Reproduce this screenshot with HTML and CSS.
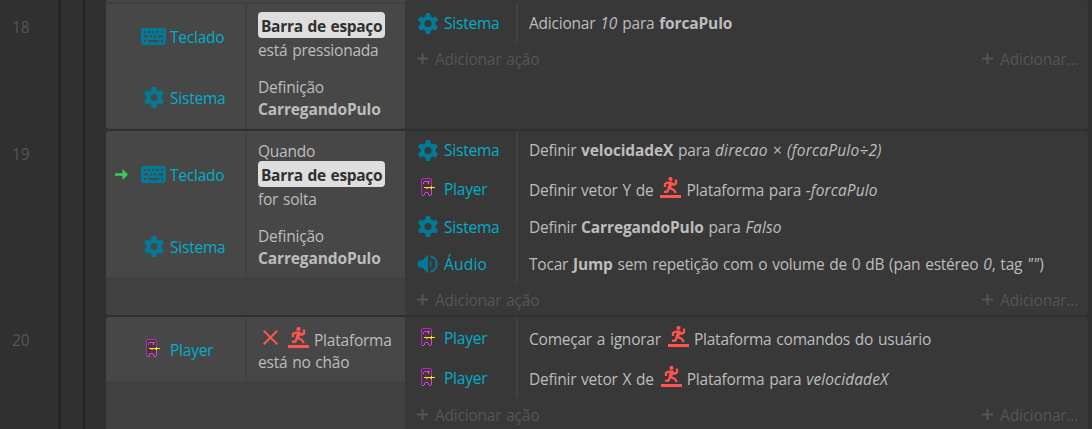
FILE: index.html
```
<!DOCTYPE html>
<html lang="pt-BR">
<head>
<meta charset="utf-8">
<title>Folha de eventos</title>
<link rel="stylesheet" href="styles.css">
</head>
<body>
<svg class="defs" aria-hidden="true">
  <symbol id="gear" viewBox="0 0 20 21"><path fill-rule="evenodd" d="M8 0h4l.7 3.300 2 1.100L18 3.600l2 3.400-2.400 2.300v2.400L20 14l-2 3.400-3.300-.9-2 1.200L12 21H8l-.7-3.300-2-1.200-3.300.9L0 14l2.400-2.300V9.300L0 7l2-3.400 3.300.8 2-1.100zM10 7a3.500 3.500 0 1 0 0 7a3.500 3.500 0 1 0 0-7z"/></symbol>
  <symbol id="keyboard" viewBox="0 0 25 17"><path fill-rule="evenodd" d="M1.500 0h22L25 1.500v14L23.500 17h-22L0 15.500v-14zM3 3v2h2V3zm4 0v2h2V3zm4 0v2h2V3zm4 0v2h2V3zm5 0v2h2V3zM3 7.500v2h4v-2zm6 0v2h2v-2zm4 0v2h2v-2zm4 0v2h5v-2zM3 12v2h2v-2zm4 0v2h11v-2zm13 0v2h2v-2z"/></symbol>
  <symbol id="speaker" viewBox="0 0 20 18"><path d="M0 5.500h4L10 0v18l-6-5.500H0zM12 5q3 4 0 8z"/><path d="M12.500 1.200a8 8 0 0 1 0 15.600" fill="none" stroke="currentColor" stroke-width="2"/></symbol>
  <symbol id="player" viewBox="0 0 14 18"><g shape-rendering="crispEdges"><path fill="#4a3049" d="M1 1h9v13H1z"/><path fill="#a832a5" d="M1 0h9v1H1zM0 1h1v16H0zM10 1h1v7h-1z"/><path fill="#dc44d8" d="M3 3h6v1H3zM2 4h1v2H2zM10 11h1v6h-1zM1 17h2v1H1zM8 17h2v1H8zM3 15h1v2H3zM7 15h1v2H7zM4 14h3v1H4z"/><path fill="#baa51b" d="M7 4h1v2H7zM5 10h2v1H5zM9 10h2v1H9z"/><path fill="#f1e800" d="M3 9h11v1H3zM10 8h1v3h-1z"/></g></symbol>
  <symbol id="runner" viewBox="0 0 21 21"><circle cx="10.500" cy="2" r="2.100"/><path fill="none" stroke="currentColor" stroke-width="2.300" stroke-linejoin="round" d="M5 10V6.800L8 5.600h3.500l1.800 2.300L16 6.500V2.500"/><path fill="none" stroke="currentColor" stroke-width="3.600" d="M10.800 6L9.300 11"/><path fill="none" stroke="currentColor" stroke-width="2.300" stroke-linejoin="round" d="M4 14.800l3.500-.3L9 10.800l5 2.200L15.800 16"/><path d="M0 18h21v3H0z"/></symbol>
  <symbol id="plus" viewBox="0 0 11 11"><path d="M4.500 0h2v4.500H11v2H6.500V11h-2V6.500H0v-2h4.500z"/></symbol>
  <symbol id="cross" viewBox="0 0 15 15"><path fill="none" stroke="currentColor" stroke-width="2" d="M.7.700l13.600 13.600M14.300.700L.7 14.300"/></symbol>
  <symbol id="arrow" viewBox="0 0 13 11"><path d="M0 4.300h7.500V0l5.500 5.500L7.500 11V6.700H0z"/></symbol>
</svg>
<main class="sheet">
  <div class="events">
    <section class="event event-previous"><div class="number"></div><div class="conditions"><div class="filled"></div></div><div class="actions"></div></section>

    <section class="event event-18">
      <div class="number">18</div>
      <div class="conditions">
        <div class="condition tall">
          <div class="object"><span class="marker"></span><svg class="icon keyboard"><use href="#keyboard"/></svg><span class="name">Teclado</span></div>
          <div class="text"><p class="key-line"><b class="key">Barra de espaço</b></p><p>está pressionada</p></div>
        </div>
        <div class="condition">
          <div class="object"><span class="marker"></span><svg class="icon gear"><use href="#gear"/></svg><span class="name sistema">Sistema</span></div>
          <div class="text"><p>Definição</p><p><b>CarregandoPulo</b></p></div>
        </div>
      </div>
      <div class="actions">
        <div class="action"><div class="object"><svg class="icon gear"><use href="#gear"/></svg><span class="name">Sistema</span></div><p class="text">Adicionar <i>10</i> para <b>forcaPulo</b></p></div>
        <div class="add"><span class="add-link"><svg class="plus"><use href="#plus"/></svg><span>Adicionar ação</span></span><span class="add-link"><svg class="plus"><use href="#plus"/></svg><span>Adicionar...</span></span></div>
      </div>
    </section>

    <section class="event event-19">
      <div class="number">19</div>
      <div class="conditions">
        <div class="condition triple">
          <div class="object"><span class="marker"><svg class="arrow"><use href="#arrow"/></svg></span><svg class="icon keyboard"><use href="#keyboard"/></svg><span class="name">Teclado</span></div>
          <div class="text"><p>Quando</p><p class="key-line"><b class="key">Barra de espaço</b></p><p>for solta</p></div>
        </div>
        <div class="condition">
          <div class="object"><span class="marker"></span><svg class="icon gear"><use href="#gear"/></svg><span class="name sistema">Sistema</span></div>
          <div class="text"><p>Definição</p><p><b>CarregandoPulo</b></p></div>
        </div>
      </div>
      <div class="actions">
        <div class="action"><div class="object"><svg class="icon gear"><use href="#gear"/></svg><span class="name">Sistema</span></div><p class="text">Definir <b>velocidadeX</b> para <i class="formula">direcao × (forcaPulo÷2)</i></p></div>
        <div class="action high"><div class="object"><svg class="icon player"><use href="#player"/></svg><span class="name">Player</span></div><p class="text"><span>Definir vetor Y de</span><svg class="runner"><use href="#runner"/></svg><span>Plataforma para <i>-forcaPulo</i></span></p></div>
        <div class="action short"><div class="object"><svg class="icon gear"><use href="#gear"/></svg><span class="name">Sistema</span></div><p class="text">Definir <b>CarregandoPulo</b> para <i>Falso</i></p></div>
        <div class="action short"><div class="object"><svg class="icon speaker"><use href="#speaker"/></svg><span class="name audio">Áudio</span></div><p class="text">Tocar <b>Jump</b> sem repetição com o volume de 0 dB (pan estéreo <i>0</i>, tag <i>""</i>)</p></div>
        <div class="add"><span class="add-link"><svg class="plus"><use href="#plus"/></svg><span>Adicionar ação</span></span><span class="add-link"><svg class="plus"><use href="#plus"/></svg><span>Adicionar...</span></span></div>
      </div>
    </section>

    <section class="event event-20">
      <div class="number">20</div>
      <div class="conditions">
        <div class="condition platform">
          <div class="object"><span class="marker"></span><svg class="icon player"><use href="#player"/></svg><span class="name">Player</span></div>
          <div class="text"><p class="icon-line"><svg class="cross"><use href="#cross"/></svg><svg class="runner"><use href="#runner"/></svg><span>Plataforma</span></p><p>está no chão</p></div>
        </div>
      </div>
      <div class="actions">
        <div class="action high"><div class="object"><svg class="icon player"><use href="#player"/></svg><span class="name">Player</span></div><p class="text"><span>Começar a ignorar</span><svg class="runner"><use href="#runner"/></svg><span>Plataforma comandos do usuário</span></p></div>
        <div class="action high"><div class="object"><svg class="icon player"><use href="#player"/></svg><span class="name">Player</span></div><p class="text"><span>Definir vetor X de</span><svg class="runner"><use href="#runner"/></svg><span>Plataforma para <i>velocidadeX</i></span></p></div>
        <div class="add"><span class="add-link"><svg class="plus"><use href="#plus"/></svg><span>Adicionar ação</span></span><span class="add-link"><svg class="plus"><use href="#plus"/></svg><span>Adicionar...</span></span></div>
      </div>
    </section>
  </div>
</main>
</body>
</html>
```
FILE: styles.css
```
* { box-sizing: border-box; }
body { margin: 0; background: #303030; color: #bdbdbd; font: 15.5px/22px "Open Sans", "Noto Sans", sans-serif; letter-spacing: -0.22px; word-spacing: 1px; }
p { margin: 0; white-space: nowrap; }
b { letter-spacing: -0.13px; }
i { letter-spacing: 0.1px; }
.formula { letter-spacing: 0.2px; }
svg { display: block; flex: none; fill: currentColor; }
.defs { position: absolute; width: 0; height: 0; }
.sheet { width: 1092px; height: 429px; overflow: hidden; background: linear-gradient(90deg, #303030 58px, #232323 58px 61px, #303030 61px 83px, #232323 83px 85px, #303030 85px); }
.events { display: flex; flex-direction: column; gap: 2px; }
.event { display: grid; grid-template-columns: 106px 299px 683px; flex: none; }
.event-previous { height: 2px; }
.event-18 { height: 125px; }
.event-19 { height: 184px; }
.event-20 { height: 120px; }
.number { padding: 12px 0 0 12px; color: #555; letter-spacing: 0; }
.conditions { background: #404040; border-radius: 3px 0 0 3px; overflow: hidden; }
.filled { height: 2px; background: #474747; }
.actions { background: #383838; border-radius: 0 3px 3px 0; }
.condition { display: grid; grid-template-columns: 139px 1fr; height: 61px; background: #474747; }
.condition.tall { height: 63px; }
.condition.triple { height: 85px; }
.condition.platform { height: 64px; }
.condition .object { display: grid; grid-template-columns: 35px 25px 1fr; align-items: center; justify-items: center; }
.condition .name { justify-self: start; padding: 1px 0 0 4px; }
.condition .keyboard { margin-top: 2px; }
.condition .keyboard + .name { padding-top: 2px; }
.condition .sistema { padding-top: 0; }
.condition .player { margin: 0 2px 2px 0; }
.condition .text { border-left: 2px solid #414141; padding: 9px 0 0 11px; }
.condition.tall .text { padding-top: 8px; }
.condition.triple .text { padding-top: 9px; }
.triple .text p:first-child { height: 21px; }
.key-line { height: 26px; margin-bottom: 1px; }
.key { display: inline-block; width: 127px; height: 26px; padding: 2px 0 0 3px; line-height: 24px; border-radius: 4px; background: #dedede; color: #303030; letter-spacing: -0.3px; }
.object { color: #027a95; }
.name { color: #00aecb; white-space: nowrap; }
.audio { letter-spacing: 0.2px; }
.gear { width: 20px; height: 21px; }
.keyboard { width: 25px; height: 17px; }
.speaker { width: 20px; height: 18px; }
.player { width: 14px; height: 18px; }
.arrow { width: 13px; height: 11px; color: #36cf62; }
.marker { padding: 2px 4px 0 0; }
.action { display: grid; grid-template-columns: 111px 1fr; height: 38px; }
.action.high { height: 40px; }
.event-19 .action.high { height: 39px; }
.event-20 .actions { padding-top: 1px; }
.action.short { height: 37px; }
.action.short .name { padding-top: 1px; }
.action .object { display: grid; grid-template-columns: 20px 1fr; align-items: center; padding-left: 13px; column-gap: 6px; }
.action .player { margin-left: 3px; margin-bottom: 3px; }
.action .text { border-left: 2px solid #414141; padding: 8px 0 0 11px; }
.action.high .text { display: flex; align-items: flex-start; padding-top: 10px; }
.runner { width: 21px; height: 21px; color: #ff5452; }
.text .runner { margin: -2px 5px 0 7px; }
.icon-line { display: flex; padding-left: 5px; margin-top: 3px; }
.cross { width: 15px; height: 15px; color: #ff5452; margin: 1px 3px 0 0; }
.add { display: flex; justify-content: space-between; padding: 6px 10px 0 12px; color: #555; }
.event-19 .add { padding-top: 7px; }
.add-link { display: flex; gap: 7px; }
.plus { width: 11px; height: 11px; margin-top: 5px; }
```
